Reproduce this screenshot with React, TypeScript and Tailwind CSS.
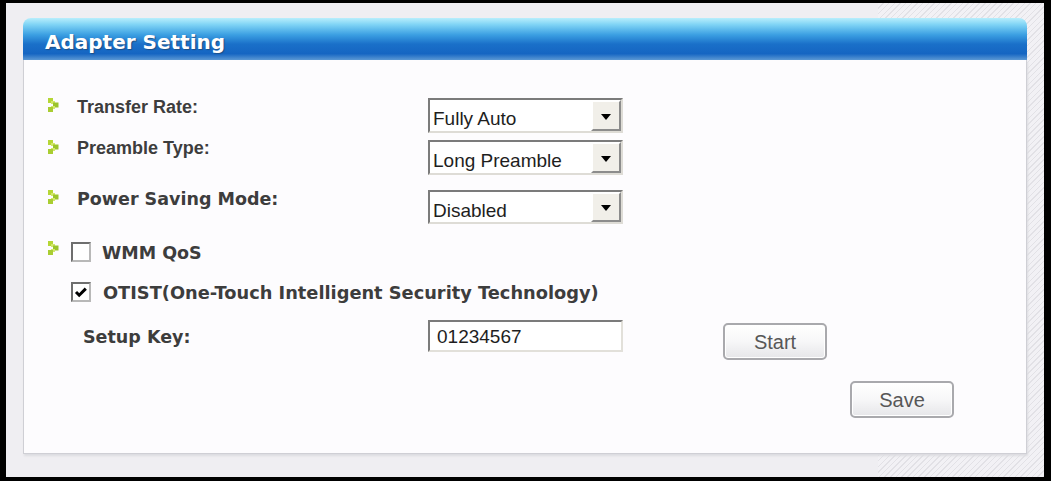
import React from "react";

const labelFont = { fontFamily: '"Liberation Sans", Arial, sans-serif' };
const wideFont = { fontFamily: '"DejaVu Sans", Verdana, sans-serif' };

function Bullet() {
  return (
    <svg width="11" height="14" viewBox="0 0 11 14" className="shrink-0">
      <rect x="0" y="0" width="5" height="5" fill="#b5d636" />
      <rect x="3" y="3" width="4" height="3" fill="#d2e86a" />
      <rect x="5" y="4.5" width="5.5" height="5" fill="#9bc42c" />
      <rect x="3" y="8" width="4" height="3" fill="#d2e86a" />
      <rect x="0" y="9" width="5" height="5" fill="#a9cd32" />
    </svg>
  );
}

function Select({ value }: { value: string }) {
  return (
    <div className="flex h-full w-[195px] border-2 border-t-[#7b7b7b] border-l-[#7b7b7b] border-r-[#dedcd6] border-b-[#dedcd6] bg-white font-normal">
      <div
        className="flex flex-1 items-center pl-[3px] pt-[7px] text-[19px] leading-[20px] text-[#1e1e1e]"
        style={labelFont}
      >
        {value}
      </div>
      <div className="flex w-[30px] items-center justify-center border-2 border-t-white border-l-white border-r-[#8c8c8c] border-b-[#8c8c8c] bg-[#f1efe9] pt-[2px]">
        <div className="h-0 w-0 border-x-[5px] border-t-[6px] border-x-transparent border-t-black" />
      </div>
    </div>
  );
}

function Checkbox({ checked }: { checked?: boolean }) {
  return (
    <div className="flex h-[20px] w-[20px] shrink-0 items-center justify-center border-2 border-t-[#6e6e6e] border-l-[#6e6e6e] border-r-[#b8b8b8] border-b-[#b8b8b8] bg-white">
      {checked && (
        <svg width="14" height="14" viewBox="0 0 14 14">
          <path d="M2 7 L5.2 10.2 L11.8 3.6" fill="none" stroke="#000" strokeWidth="3" />
        </svg>
      )}
    </div>
  );
}

function Button({ children }: { children: React.ReactNode }) {
  return (
    <button
      className="flex h-[37px] w-[104px] items-center justify-center rounded-[5px] border-2 border-[#a9a9ad] bg-[linear-gradient(to_bottom,#ffffff_0%,#f7f7f8_50%,#e6e6e9_100%)] text-[20px] font-normal text-[#575757] shadow-[inset_0_0_0_1px_#ffffff]"
      style={labelFont}
    >
      {children}
    </button>
  );
}

export default function App() {
  const rows = [
    { label: "Transfer Rate:", value: "Fully Auto", mt: "mt-0", lmt: "-mt-[2px]", h: "h-[35px]", wide: false },
    { label: "Preamble Type:", value: "Long Preamble", mt: "mt-[7px]", lmt: "-mt-[3px]", h: "h-[35px]", wide: false },
    { label: "Power Saving Mode:", value: "Disabled", mt: "mt-[15px]", lmt: "-mt-[2px]", h: "h-[34px]", wide: true },
  ];

  return (
    <div className="h-[481px] w-[1051px] border-t-[3px] border-r-[7px] border-b-[4px] border-l-[6px] border-black bg-[linear-gradient(to_right,#efeef2_0,#efeef2_84%,transparent_84%),repeating-linear-gradient(135deg,#e2e1e6_0,#e2e1e6_1px,#f2f1f5_1px,#f2f1f5_4px)] pt-[15px] pl-[17px] pr-[17px]">
      <div className="flex h-[436px] flex-col">
        {/* header */}
        <div className="flex h-[42px] items-center rounded-t-[8px] bg-[linear-gradient(to_bottom,#b8eefc_0%,#7ed3f5_16%,#3b9fe2_40%,#1a70c9_62%,#1565c2_85%,#5b98d4_100%)] pl-[22px] pt-[5px]">
          <span className="text-[20px] font-bold text-white [text-shadow:1px_1px_1px_#1d4f86]" style={wideFont}>
            Adapter Setting
          </span>
        </div>

        {/* body */}
        <div
          className="flex-1 border-x border-b border-[#cfcfd5] bg-[#fdfcfe] pt-[38px] pl-[24px] font-bold text-[#3d3d3d] shadow-[1px_2px_2px_#dcdce0]"
          style={labelFont}
        >
          {rows.map((r) => (
            <div key={r.label} className={`flex items-start ${r.mt} ${r.h}`}>
              <div className="flex w-[380px] items-start">
                <Bullet />
                <span
                  className={`ml-[18px] leading-[22px] ${r.wide ? "text-[17.5px]" : "text-[18px]"} ${r.lmt}`}
                  style={r.wide ? wideFont : labelFont}
                >
                  {r.label}
                </span>
              </div>
              <Select value={r.value} />
            </div>
          ))}

          <div className="mt-[18px] flex h-[20px] items-start text-[17.5px]" style={wideFont}>
            <div className="mt-[-1px]">
              <Bullet />
            </div>
            <div className="ml-[12px]">
              <Checkbox />
            </div>
            <span className="ml-[11px] leading-[22px]">WMM QoS</span>
          </div>

          <div className="mt-[20px] flex h-[20px] items-start pl-[23px] text-[17.8px]" style={wideFont}>
            <Checkbox checked />
            <span className="ml-[12px] leading-[22px]">
              OTIST(One-Touch Intelligent Security Technology)
            </span>
          </div>

          <div className="mt-[18px] flex h-[40px] items-start">
            <div className="w-[380px] pl-[35px] pt-[6px] text-[17.5px] leading-[22px]" style={wideFont}>
              Setup Key:
            </div>
            <div className="flex h-[32px] w-[195px] items-center border-2 border-t-[#7b7b7b] border-l-[#7b7b7b] border-r-[#e2e0da] border-b-[#e2e0da] bg-white pl-[7px] pt-[3px] text-[19px] font-normal text-[#1e1e1e]">
              01234567
            </div>
            <div className="ml-[100px] mt-[3px]">
              <Button>Start</Button>
            </div>
          </div>

          <div className="mt-[21px] ml-[802px]">
            <Button>Save</Button>
          </div>
        </div>
      </div>
    </div>
  );
}
